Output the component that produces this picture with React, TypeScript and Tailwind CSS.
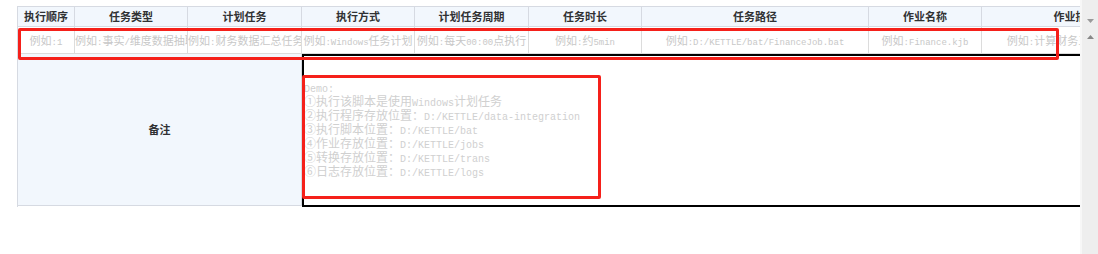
import React from "react";

// Half-width runs (ASCII) are set narrower than the CJK glyphs around them,
// the way SimSun-style fonts render mixed text.
const HALF_WIDTH = /([\x20-\x7e]+)/;

function Mixed({ text, latin }: { text: string; latin: string }) {
  return (
    <>
      {text.split(HALF_WIDTH).map((part, i) =>
        HALF_WIDTH.test(part) ? (
          <span key={i} className={`leading-[0] ${latin}`}>
            {part}
          </span>
        ) : (
          part
        ),
      )}
    </>
  );
}

interface Column {
  title: string;
  example: string;
}

const columns: Column[] = [
  { title: "执行顺序", example: "例如:1" },
  { title: "任务类型", example: "例如:事实/维度数据抽取" },
  { title: "计划任务", example: "例如:财务数据汇总任务" },
  { title: "执行方式", example: "例如:Windows任务计划" },
  { title: "计划任务周期", example: "例如:每天00:00点执行" },
  { title: "任务时长", example: "例如:约5min" },
  { title: "任务路径", example: "例如:D:/KETTLE/bat/FinanceJob.bat" },
  { title: "作业名称", example: "例如:Finance.kjb" },
  { title: "作业描述", example: "例如:计算财务三大报表指标" },
];

const remarkLines = [
  "Demo:",
  "①执行该脚本是使用Windows计划任务",
  "②执行程序存放位置：D:/KETTLE/data-integration",
  "③执行脚本位置：D:/KETTLE/bat",
  "④作业存放位置：D:/KETTLE/jobs",
  "⑤转换存放位置：D:/KETTLE/trans",
  "⑥日志存放位置：D:/KETTLE/logs",
];

const cjk = "font-['Noto_Sans_CJK_SC',sans-serif]";
const mono = "font-['Liberation_Mono',monospace]";

function ScrollBar() {
  return (
    <div className="flex w-[18px] flex-col border-l-2 border-[#f7f7f7] bg-[#eeeeee]">
      <div className="flex h-[29px] items-end justify-center pb-[6px]">
        <svg width="7" height="4" viewBox="0 0 7 4">
          <path d="M0 0h7L3.5 4z" fill="#9a9a9a" />
        </svg>
      </div>
      <div className="flex justify-center pt-[6px]">
        <svg width="7" height="4" viewBox="0 0 7 4">
          <path d="M0 4h7L3.5 0z" fill="#888888" />
        </svg>
      </div>
    </div>
  );
}

export default function App() {
  return (
    <div className={`relative flex h-[254px] w-[1098px] overflow-hidden bg-white ${cjk}`}>
      <div className="flex-1 overflow-hidden pl-[17px] pt-[6px]">
        <div className="grid w-max grid-cols-[57px_113px_114px_113px_114px_113px_227px_113px_188px] border-l border-t border-[#d6dae2]">
          {/* 表头 */}
          {columns.map((col) => (
            <div
              key={col.title}
              className="flex h-[20px] items-center justify-center overflow-hidden whitespace-nowrap border-b border-r border-[#d6dae2] bg-[#f2f7fd] text-[11px] font-bold text-[#303133]"
            >
              {col.title}
            </div>
          ))}

          {/* 示例行 */}
          {columns.map((col) => (
            <div
              key={col.example}
              className="h-[27px] overflow-hidden whitespace-nowrap border-b border-r border-[#dcdcdc] text-center text-[11px] leading-[26px] text-[#c8c8c8]"
            >
              <Mixed text={col.example} latin={`${mono} text-[9px]`} />
            </div>
          ))}

          {/* 备注 */}
          <div className="col-span-3 flex h-[152px] items-center justify-center self-start border-b border-r border-[#d6dae2] bg-[#f2f7fd] text-[11px] font-bold text-[#303133]">
            备注
          </div>
          <div className="col-span-6 flex h-[153px] flex-col justify-center overflow-hidden border-2 border-black pb-[4px] text-[12px] leading-[14px] text-[#d0d0d0]">
            {remarkLines.map((line) => (
              <div key={line} className="h-[14px] whitespace-nowrap">
                <Mixed text={line} latin={`${mono} text-[10px]`} />
              </div>
            ))}
          </div>
        </div>
      </div>

      <ScrollBar />

      {/* 标注框 */}
      <div className="pointer-events-none absolute left-[18px] top-[28px] h-[32px] w-[1041px] rounded-[2px] border-[3px] border-[#f5201a]" />
      <div className="pointer-events-none absolute left-[302px] top-[75px] h-[124px] w-[299px] rounded-[2px] border-[3px] border-[#f5201a]" />
    </div>
  );
}
